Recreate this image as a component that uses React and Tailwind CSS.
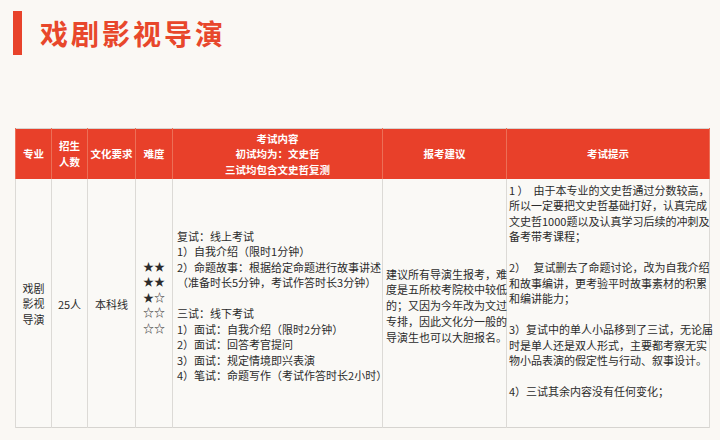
const font = { fontFamily: '"Noto Sans CJK SC", "Noto Sans", sans-serif' };

const Lines = ({ lines }) => (
  <>
    {lines.map((l, i) => (
      <div key={i} className="whitespace-pre">
        {l === "" ? "\u00a0" : l}
      </div>
    ))}
  </>
);

const exam = [
  "复试：线上考试",
  "1）自我介绍（限时1分钟）",
  "2）命题故事：根据给定命题进行故事讲述",
  "（准备时长5分钟，考试作答时长3分钟）",
  "",
  "三试：线下考试",
  "1）面试：自我介绍（限时2分钟）",
  "2）面试：回答考官提问",
  "3）面试：规定情境即兴表演",
  "4）笔试：命题写作（考试作答时长2小时）",
];

const advice = [
  "建议所有导演生报考，难",
  "度是五所校考院校中较低",
  "的；又因为今年改为文过",
  "专排，因此文化分一般的",
  "导演生也可以大胆报名。",
];

const tips = [
  "1 ）  由于本专业的文史哲通过分数较高，",
  "所以一定要把文史哲基础打好，认真完成",
  "文史哲1000题以及认真学习后续的冲刺及",
  "备考带考课程；",
  "",
  "2）   复试删去了命题讨论，改为自我介绍",
  "和故事编讲，更考验平时故事素材的积累",
  "和编讲能力；",
  "",
  "3）复试中的单人小品移到了三试，无论届",
  "时是单人还是双人形式，主要都考察无实",
  "物小品表演的假定性与行动、叙事设计。",
  "",
  "4）三试其余内容没有任何变化；",
];

export default function App() {
  const th =
    "border-x border-[#ec6f57] text-white font-bold text-[10.5px] leading-[15.5px] text-center align-middle px-0 whitespace-nowrap";
  const td =
    "border-x border-[#dcdad6] text-[#2b2b2b] text-[11px] leading-[15.5px] align-top";
  return (
    <div className="w-[720px] h-[440px] bg-[#faf8f4] overflow-hidden" style={font}>
      <div className="flex items-center pt-[11px] pl-[13px]">
        <div className="w-[9px] h-[44px] bg-[#e8432b]" />
        <div className="ml-[18px] text-[28px] font-bold tracking-[3px] text-[#e8472b] leading-none">
          戏剧影视导演
        </div>
      </div>
      <table className="ml-[15px] mt-[73px] w-[694px] border-collapse table-fixed border border-[#d6d4d0]">
        <colgroup>
          <col className="w-[36px]" />
          <col className="w-[36px]" />
          <col className="w-[48px]" />
          <col className="w-[37px]" />
          <col className="w-[210px]" />
          <col className="w-[124px]" />
          <col className="w-[203px]" />
        </colgroup>
        <thead>
          <tr className="h-[50px] bg-[#e8402a]">
            <th className={th}>专业</th>
            <th className={th}>
              招生
              <br />
              人数
            </th>
            <th className={th}>文化要求</th>
            <th className={th}>难度</th>
            <th className={th}>
              考试内容
              <br />
              初试均为：文史哲
              <br />
              三试均包含文史哲复测
            </th>
            <th className={th}>报考建议</th>
            <th className={th}>考试提示</th>
          </tr>
        </thead>
        <tbody>
          <tr className="h-[249px] bg-[#faf9f6]">
            <td className={`${td} text-center pt-[102px]`}>
              <Lines lines={["戏剧", "影视", "导演"]} />
            </td>
            <td className={`${td} text-center pt-[118px]`}>25人</td>
            <td className={`${td} text-center pt-[118px]`}>本科线</td>
            <td className={`${td} text-center pt-[80px]`}>
              <Lines lines={["★★", "★★", "★☆", "☆☆", "☆☆"]} />
            </td>
            <td className={`${td} pl-[4px] pt-[50px]`}>
              <Lines lines={exam} />
            </td>
            <td className={`${td} pl-[3px] pt-[88px] text-[10.6px] leading-[15.8px]`}>
              <Lines lines={advice} />
            </td>
            <td className={`${td} pl-[2px] pt-[4px]`}>
              <Lines lines={tips} />
            </td>
          </tr>
        </tbody>
      </table>
    </div>
  );
}
